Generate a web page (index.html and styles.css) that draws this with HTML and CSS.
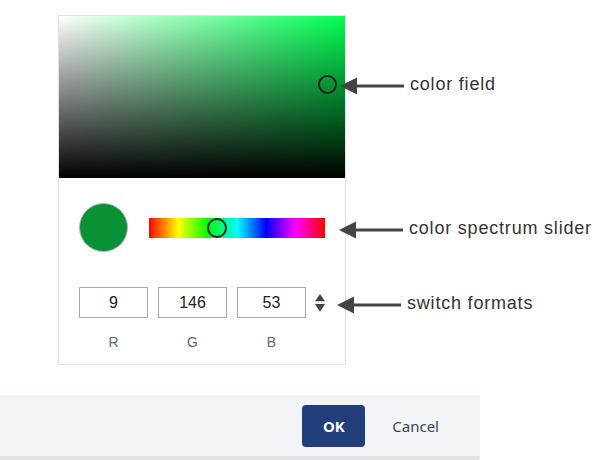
FILE: index.html
```html
<!DOCTYPE html>
<html lang="en">
<head>
    <meta charset="UTF-8">
    <meta name="viewport" content="width=device-width, initial-scale=1.0">
    <title>Color picker</title>
    <link rel="stylesheet" href="styles.css">
</head>
<body>
    <div class="stage">
        <div class="picker">
            <div class="field">
                <span class="field-thumb"></span>
            </div>
            <div class="picker-body">
                <div class="row-top">
                    <div class="swatch"></div>
                    <div class="spectrum">
                        <span class="spectrum-thumb"></span>
                    </div>
                </div>
                <div class="row-inputs">
                    <div class="channel">
                        <input type="text" value="9">
                        <div class="channel-label">R</div>
                    </div>
                    <div class="channel">
                        <input type="text" value="146">
                        <div class="channel-label">G</div>
                    </div>
                    <div class="channel">
                        <input type="text" value="53">
                        <div class="channel-label">B</div>
                    </div>
                    <svg class="switch" width="11" height="20" viewBox="0 0 11 20">
                        <polygon points="5.5,0 11,8 0,8" fill="#444"/>
                        <polygon points="0,11 11,11 5.5,19.5" fill="#444"/>
                    </svg>
                </div>
            </div>
        </div>

        <!-- callouts -->
        <div class="callout callout-field">
            <svg width="64" height="18" viewBox="0 0 64 18"><polygon points="0,9 17,0.5 17,17.5" fill="#444"/><line x1="15" y1="9" x2="64" y2="9" stroke="#444" stroke-width="3"/></svg>
            <span>color field</span>
        </div>
        <div class="callout callout-spectrum">
            <svg width="64" height="18" viewBox="0 0 64 18"><polygon points="0,9 17,0.5 17,17.5" fill="#444"/><line x1="15" y1="9" x2="64" y2="9" stroke="#444" stroke-width="3"/></svg>
            <span>color spectrum slider</span>
        </div>
        <div class="callout callout-formats">
            <svg width="64" height="18" viewBox="0 0 64 18"><polygon points="0,9 17,0.5 17,17.5" fill="#444"/><line x1="15" y1="9" x2="64" y2="9" stroke="#444" stroke-width="3"/></svg>
            <span>switch formats</span>
        </div>

        <div class="footer">
            <button class="btn-ok">OK</button>
            <button class="btn-cancel">Cancel</button>
        </div>
    </div>
</body>
</html>
```

FILE: styles.css
```css
body {
    margin: 0;
    font-family: "Liberation Sans", Arial, sans-serif;
    background: #fff;
}
.stage {
    position: relative;
    width: 607px;
    height: 460px;
    overflow: hidden;
    padding-top: 15px;
    box-sizing: border-box;
}
.picker {
    width: 286px;
    margin-left: 58px;
    border: 1px solid #e2e2e2;
    background: #fff;
}
.field {
    position: relative;
    height: 162px;
    background:
        linear-gradient(to top, #000, rgba(0, 0, 0, 0)),
        linear-gradient(to right, #fff, #00ff52);
}
.field-thumb {
    position: absolute;
    left: 259px;
    top: 59px;
    width: 15px;
    height: 15px;
    border: 2px solid #222;
    border-radius: 50%;
}
.picker-body {
    padding: 25px 20px 14px 20px;
}
.row-top {
    display: flex;
    align-items: center;
}
.swatch {
    width: 47px;
    height: 47px;
    border-radius: 50%;
    background: #099235;
    border: 1px solid #b5b5b5;
}
.spectrum {
    position: relative;
    margin-left: 21px;
    width: 176px;
    height: 20px;
    background: linear-gradient(to right, #f00, #ff0 16.6%, #0f0 33.3%, #0ff 50%, #00f 66.6%, #f0f 83.3%, #f00);
}
.spectrum-thumb {
    position: absolute;
    left: 58px;
    top: 0px;
    width: 16px;
    height: 16px;
    border: 2px solid #222;
    border-radius: 50%;
}
.row-inputs {
    display: flex;
    align-items: flex-start;
    gap: 10px;
    margin-top: 35px;
}
.channel {
    display: flex;
    flex-direction: column;
    align-items: center;
}
.channel input {
    width: 69px;
    height: 31px;
    box-sizing: border-box;
    border: 1px solid #aaa;
    padding: 0;
    text-align: center;
    font-family: "Liberation Sans", Arial, sans-serif;
    font-size: 16px;
    color: #222;
    outline: none;
}
.channel-label {
    margin-top: 16px;
    font-size: 14px;
    line-height: 16px;
    color: #666;
}
.switch {
    margin-top: 6px;
    margin-left: -1px;
}
.callout {
    position: absolute;
    display: flex;
    align-items: center;
    gap: 6px;
    font-size: 18px;
    line-height: 18px;
    letter-spacing: 0.8px;
    color: #333;
}
.callout span {
    margin-bottom: 3px;
}
.callout-field {
    left: 340px;
    top: 75px;
}
.callout-spectrum {
    left: 339px;
    top: 219px;
}
.callout-formats {
    left: 337px;
    top: 294px;
}
.footer {
    display: flex;
    justify-content: flex-end;
    align-items: center;
    width: 455px;
    height: 61px;
    margin-top: 30px;
    padding-right: 25px;
    background: #f2f4f8;
    border-bottom: 4px solid #e1e3e7;
    border-bottom-right-radius: 3px;
    font-family: "Noto Sans", sans-serif;
}
.btn-ok {
    width: 63px;
    height: 42px;
    background: #233f7b;
    color: #fff;
    border: none;
    border-radius: 4px;
    font-family: "Noto Sans", sans-serif;
    font-weight: bold;
    font-size: 15px;
    cursor: pointer;
}
.btn-cancel {
    margin-left: 11px;
    padding: 0 16px;
    height: 42px;
    background: none;
    border: none;
    color: #3b4453;
    font-family: "Noto Sans", sans-serif;
    font-size: 15px;
    cursor: pointer;
}
```
